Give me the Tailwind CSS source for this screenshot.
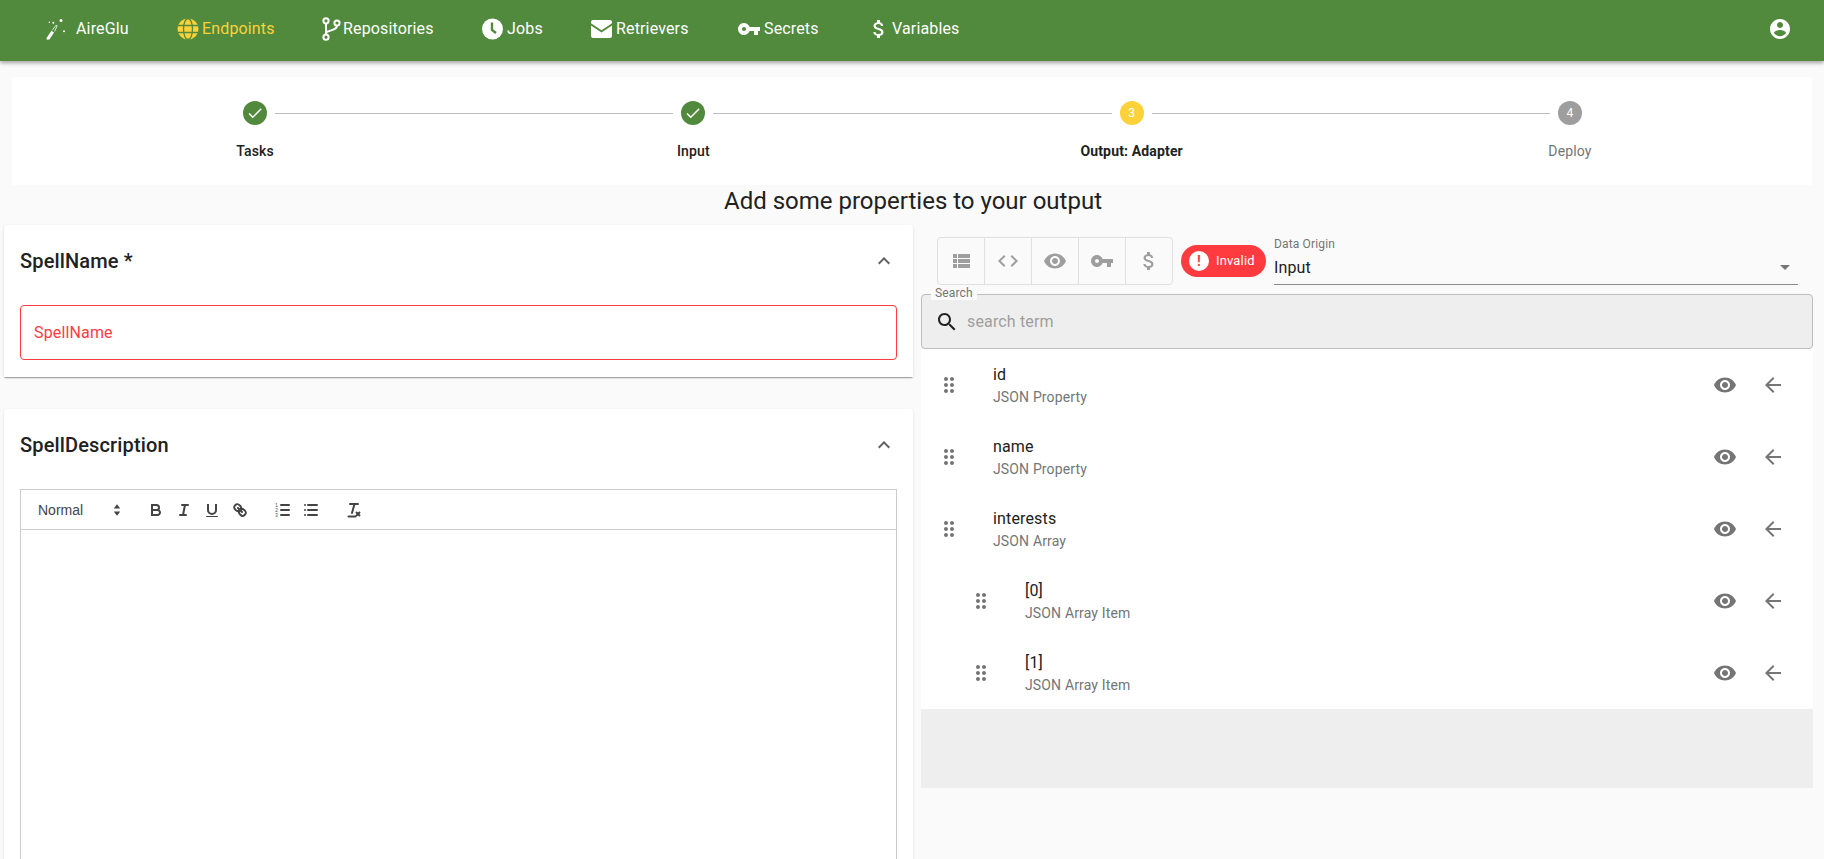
<!DOCTYPE html>
<html lang="en">
<head>
    <meta charset="UTF-8">
    <title>AireGlu</title>
    <script src="https://cdn.jsdelivr.net/npm/@tailwindcss/browser@4"></script>
</head>
<body class="bg-[#fafafa] font-[Roboto,sans-serif] tracking-[0.15px] text-[#212121] h-[859px] overflow-hidden">
    <!-- shared icons -->
    <svg class="hidden">
        <symbol id="i-eye" viewBox="0 0 24 24"><path d="M12 4.5C7 4.5 2.73 7.61 1 12c1.73 4.39 6 7.5 11 7.5s9.27-3.11 11-7.5c-1.73-4.39-6-7.5-11-7.5zM12 17c-2.76 0-5-2.24-5-5s2.24-5 5-5 5 2.24 5 5-2.24 5-5 5zm0-8c-1.66 0-3 1.34-3 3s1.34 3 3 3 3-1.34 3-3-1.34-3-3-3z"/></symbol>
        <symbol id="i-back" viewBox="0 0 24 24"><path d="M20 11H7.83l5.59-5.59L12 4l-8 8 8 8 1.41-1.41L7.83 13H20v-2z"/></symbol>
        <symbol id="i-drag" viewBox="0 0 24 24"><path d="M11 18c0 1.1-.9 2-2 2s-2-.9-2-2 .9-2 2-2 2 .9 2 2zm-2-8c-1.1 0-2 .9-2 2s.9 2 2 2 2-.9 2-2-.9-2-2-2zm0-6c-1.1 0-2 .9-2 2s.9 2 2 2 2-.9 2-2-.9-2-2-2zm6 4c1.1 0 2-.9 2-2s-.9-2-2-2-2 .9-2 2 .9 2 2 2zm0 2c-1.1 0-2 .9-2 2s.9 2 2 2 2-.9 2-2-.9-2-2-2zm0 6c-1.1 0-2 .9-2 2s.9 2 2 2 2-.9 2-2-.9-2-2-2z"/></symbol>
        <symbol id="i-key" viewBox="0 0 24 24"><path d="M12.65 10C11.83 7.67 9.61 6 7 6c-3.31 0-6 2.69-6 6s2.69 6 6 6c2.61 0 4.83-1.67 5.65-4H17v4h4v-4h2v-4H12.65zM7 14c-1.1 0-2-.9-2-2s.9-2 2-2 2 .9 2 2-.9 2-2 2z"/></symbol>
        <symbol id="i-dollar" viewBox="0 0 24 24"><path d="M11.8 10.9c-2.27-.59-3-1.2-3-2.15 0-1.09 1.01-1.85 2.7-1.85 1.78 0 2.44.85 2.5 2.1h2.21c-.07-1.72-1.12-3.3-3.21-3.81V3h-3v2.16c-1.94.42-3.5 1.68-3.5 3.61 0 2.31 1.91 3.46 4.7 4.13 2.5.6 3 1.48 3 2.41 0 .69-.49 1.79-2.7 1.79-2.06 0-2.87-.92-2.98-2.1h-2.2c.12 2.19 1.76 3.42 3.68 3.83V21h3v-2.15c1.95-.37 3.5-1.5 3.5-3.55 0-2.84-2.43-3.81-4.7-4.4z"/></symbol>
        <symbol id="i-check" viewBox="0 0 24 24"><path d="M9 16.17L4.83 12l-1.42 1.41L9 19 21 7l-1.41-1.41z"/></symbol>
        <symbol id="i-up" viewBox="0 0 24 24"><path d="M12 8l-6 6 1.41 1.41L12 10.83l4.59 4.58L18 14z"/></symbol>
    </svg>

    <!-- Navbar -->
    <nav class="relative z-10 h-[61px] bg-[#518a3c] text-white text-base flex items-center shadow-[0_2px_4px_rgba(0,0,0,0.35)] pl-[44px] pr-[32px] pb-1">
        <a class="flex items-center w-[133px] gap-[10px]">
            <svg class="w-[22px] h-6 shrink-0" viewBox="0 0 22 24" fill="#fff">
                <path d="M3 22.8l-.6-1.6 5-7.4 2.6 1.6-4.6 7.2z"/>
                <path d="M8.4 13.2l3.6-5 1.2.6-2.6 5.6" fill="none" stroke="#fff" stroke-width=".8"/>
                <circle cx="17" cy="3.5" r="1.5"/><circle cx="5.3" cy="5.2" r=".7"/><circle cx="9.3" cy="5.8" r="1"/><circle cx="20" cy="14.2" r="1"/>
            </svg>
            <span>AireGlu</span>
        </a>
        <a class="flex items-center w-[145px] gap-[3px] text-[#fdd13a]">
            <svg class="w-[22px] h-[22px] shrink-0" viewBox="0 0 22 22">
                <circle cx="11" cy="11" r="10.5" fill="#fdd13a"/>
                <g fill="none" stroke="#518a3c" stroke-width="1.3">
                    <ellipse cx="11" cy="11" rx="4.5" ry="10.5"/>
                    <path d="M1 7.5h20M1 14.5h20"/>
                </g>
            </svg>
            <span>Endpoints</span>
        </a>
        <a class="flex items-center w-[160px] gap-[2px]">
            <svg class="w-[19px] h-6 shrink-0" viewBox="0 0 19 24" fill="none" stroke="#fff" stroke-width="2">
                <circle cx="4" cy="3.8" r="2.6"/><circle cx="4" cy="20.2" r="2.6"/><circle cx="15" cy="6" r="2.6"/>
                <path d="M4 6.4v11.2M15 8.6c0 4.5-6 4-11 6.8"/>
            </svg>
            <span>Repositories</span>
        </a>
        <a class="flex items-center w-[109px] gap-[4px]">
            <svg class="w-[21px] h-6 shrink-0" viewBox="0 0 21 24">
                <circle cx="10.5" cy="12" r="10.5" fill="#fff"/>
                <path d="M10 5.5v7.5l4 3" fill="none" stroke="#518a3c" stroke-width="2.4"/>
            </svg>
            <span>Jobs</span>
        </a>
        <a class="flex items-center w-[146px] gap-[4px]">
            <svg class="w-[21px] h-[18px] shrink-0" viewBox="0 0 21 18">
                <path d="M2 0h17a2 2 0 0 1 2 2v1.3l-10.5 7L0 3.3V2a2 2 0 0 1 2-2zM0 5.6l10.5 7 10.5-7V16a2 2 0 0 1-2 2H2a2 2 0 0 1-2-2z" fill="#fff"/>
            </svg>
            <span>Retrievers</span>
        </a>
        <a class="flex items-center w-[130px] gap-[3px]">
            <svg class="w-6 h-6 shrink-0 fill-white"><use href="#i-key"/></svg>
            <span>Secrets</span>
        </a>
        <a class="flex items-center gap-[1px]">
            <svg class="w-6 h-6 shrink-0 fill-white"><use href="#i-dollar"/></svg>
            <span>Variables</span>
        </a>
        <svg class="w-6 h-6 ml-auto fill-white" viewBox="0 0 24 24"><path d="M12 2C6.48 2 2 6.48 2 12s4.48 10 10 10 10-4.48 10-10S17.52 2 12 2zm0 3c1.66 0 3 1.34 3 3s-1.34 3-3 3-3-1.34-3-3 1.34-3 3-3zm0 14.2c-2.5 0-4.71-1.28-6-3.22.03-1.99 4-3.08 6-3.08 1.99 0 5.97 1.09 6 3.08-1.29 1.94-3.5 3.22-6 3.22z"/></svg>
    </nav>

    <!-- Stepper -->
    <div class="mx-3 mt-[16px] h-[108px] bg-white flex pl-[231px] pr-[230px] pt-[24px] text-sm font-medium">
        <div class="w-6 flex flex-col items-center">
            <div class="w-6 h-6 shrink-0 rounded-full bg-[#518a3c] flex items-center justify-center"><svg class="w-[18px] h-[18px] fill-white"><use href="#i-check"/></svg></div>
            <span class="mt-4 whitespace-nowrap">Tasks</span>
        </div>
        <div class="flex-1 h-px bg-[#bdbdbd] mx-2 mt-3"></div>
        <div class="w-6 flex flex-col items-center">
            <div class="w-6 h-6 shrink-0 rounded-full bg-[#518a3c] flex items-center justify-center"><svg class="w-[18px] h-[18px] fill-white"><use href="#i-check"/></svg></div>
            <span class="mt-4 whitespace-nowrap">Input</span>
        </div>
        <div class="flex-1 h-px bg-[#bdbdbd] mx-2 mt-3"></div>
        <div class="w-6 flex flex-col items-center">
            <div class="w-6 h-6 shrink-0 rounded-full bg-[#fdd13a] text-white text-xs font-normal flex items-center justify-center">3</div>
            <span class="mt-4 whitespace-nowrap font-bold">Output: Adapter</span>
        </div>
        <div class="flex-1 h-px bg-[#bdbdbd] mx-2 mt-3"></div>
        <div class="w-6 flex flex-col items-center">
            <div class="w-6 h-6 shrink-0 rounded-full bg-[#9e9e9e] text-white text-xs font-normal flex items-center justify-center">4</div>
            <span class="mt-4 whitespace-nowrap font-normal text-[#757575]">Deploy</span>
        </div>
    </div>

    <h2 class="text-2xl leading-[32px] tracking-normal text-center h-[40px] pl-[2px]">Add some properties to your output</h2>

    <div class="flex gap-2 px-1 items-start">
        <!-- Left column -->
        <div class="w-[909px] shrink-0">
            <section class="bg-white h-[152px] rounded-t-sm px-4 shadow-[0_2px_1px_-1px_rgba(0,0,0,0.2),0_1px_1px_0_rgba(0,0,0,0.14),0_1px_3px_0_rgba(0,0,0,0.12)]">
                <div class="h-[72px] mb-2 flex items-center justify-between pr-[1px]">
                    <h3 class="text-xl font-medium">SpellName *</h3>
                    <svg class="w-6 h-6 fill-[#616161]"><use href="#i-up"/></svg>
                </div>
                <div class="h-[55px] border border-[#ff3b3f] rounded flex items-center px-[13px] text-[#ff3b3f] text-base">SpellName</div>
            </section>
            <section class="bg-white mt-8 h-[600px] rounded-t-sm px-4 shadow-[0_1px_3px_rgba(0,0,0,0.12)]">
                <div class="h-[72px] mb-2 flex items-center justify-between pr-[1px]">
                    <h3 class="text-xl font-medium">SpellDescription</h3>
                    <svg class="w-6 h-6 fill-[#616161]"><use href="#i-up"/></svg>
                </div>
                <!-- Editor -->
                <div class="border border-[#ccc] h-[500px] tracking-normal font-['Liberation_Sans',sans-serif]">
                    <div class="h-[40px] border-b border-[#ccc] flex items-center pl-2 text-[#444]">
                        <div class="w-[98px] pl-[9px] pr-[1px] flex items-center justify-between text-sm">
                            <span>Normal</span>
                            <svg class="w-[18px] h-[18px] fill-[#444]" viewBox="0 0 18 18"><path d="M9 3.2l3.2 4.3H5.8zM9 14.8l-3.2-4.3h6.4z"/></svg>
                        </div>
                        <div class="ml-[15px] flex">
                            <button class="w-7 h-6 flex items-center justify-center"><svg class="w-[18px] h-[18px]" viewBox="0 0 18 18" fill="none" stroke="#444" stroke-width="2"><path d="M5,4H9.5A2.5,2.5,0,0,1,12,6.5v0A2.5,2.5,0,0,1,9.5,9H5V4Z"/><path d="M5,9h5.5A2.5,2.5,0,0,1,13,11.5v0A2.5,2.5,0,0,1,10.5,14H5V9Z"/></svg></button>
                            <button class="w-7 h-6 flex items-center justify-center"><svg class="w-[18px] h-[18px]" viewBox="0 0 18 18" fill="none" stroke="#444" stroke-width="2" stroke-linecap="round"><path d="M7 4h6M5 14h6M8 14l2-10"/></svg></button>
                            <button class="w-7 h-6 flex items-center justify-center"><svg class="w-[18px] h-[18px]" viewBox="0 0 18 18" fill="none" stroke="#444" stroke-width="2"><path d="M5,3V9a4.012,4.012,0,0,0,4,4H9a4.012,4.012,0,0,0,4-4V3"/><rect x="3" y="15" width="12" height="1" rx=".5" fill="#444" stroke="none"/></svg></button>
                            <button class="w-7 h-6 flex items-center justify-center"><svg class="w-[18px] h-[18px]" viewBox="0 0 18 18" fill="none" stroke="#444" stroke-width="2" stroke-linecap="round"><path d="M7 7l4 4"/><path d="M8.9,4.577a3.476,3.476,0,0,1,.36,4.679A3.476,3.476,0,0,1,4.577,8.9C3.185,7.5,2.035,6.4,4.217,4.217S7.5,3.185,8.9,4.577Z"/><path d="M13.423,9.1a3.476,3.476,0,0,0-4.679-.36,3.476,3.476,0,0,0,.36,4.679c1.392,1.392,2.5,2.542,4.679.36S14.815,10.5,13.423,9.1Z"/></svg></button>
                        </div>
                        <div class="ml-[15px] flex">
                            <button class="w-7 h-6 flex items-center justify-center"><svg class="w-[18px] h-[18px]" viewBox="0 0 18 18" stroke="#444" stroke-width="2" stroke-linecap="round"><path d="M7 4h8M7 9h8M7 14h8"/><text x="2.5" y="5.5" font-size="4.5" text-anchor="middle" fill="#444" stroke="none">1</text><text x="2.5" y="10.5" font-size="4.5" text-anchor="middle" fill="#444" stroke="none">2</text><text x="2.5" y="15.5" font-size="4.5" text-anchor="middle" fill="#444" stroke="none">3</text></svg></button>
                            <button class="w-7 h-6 flex items-center justify-center"><svg class="w-[18px] h-[18px]" viewBox="0 0 18 18" stroke="#444" stroke-width="2" stroke-linecap="round"><path d="M6 4h9M6 9h9M6 14h9M3 4h0M3 9h0M3 14h0"/></svg></button>
                        </div>
                        <div class="ml-[15px]">
                            <button class="w-7 h-6 flex items-center justify-center"><svg class="w-[18px] h-[18px]" viewBox="0 0 18 18" fill="none" stroke="#444"><path d="M5 3h8M9.5 3L7 12M3.5 15.5h7" stroke-width="2" stroke-linecap="round"/><path d="M11 11l4 4M15 11l-4 4" stroke-width="2"/></svg></button>
                        </div>
                    </div>
                </div>
            </section>
        </div>

        <!-- Right column -->
        <div class="w-[892px] shrink-0">
            <div class="h-[69px] pt-3 pl-4 flex items-start">
                <div class="flex h-12 border border-[#e0e0e0] rounded divide-x divide-[#e0e0e0] fill-[#9e9e9e]">
                    <button class="w-[47px] flex items-center justify-center"><svg class="w-6 h-6" viewBox="0 0 24 24"><path d="M4 14h4v-4H4v4zm0 5h4v-4H4v4zM4 9h4V5H4v4zm5 5h12v-4H9v4zm0 5h12v-4H9v4zM9 5v4h12V5H9z"/></svg></button>
                    <button class="w-[47px] flex items-center justify-center"><svg class="w-6 h-6" viewBox="0 0 24 24"><path d="M9.4 16.6L4.8 12l4.6-4.6L8 6l-6 6 6 6 1.4-1.4zm5.2 0l4.6-4.6-4.6-4.6L16 6l6 6-6 6-1.4-1.4z"/></svg></button>
                    <button class="w-[47px] flex items-center justify-center"><svg class="w-6 h-6"><use href="#i-eye"/></svg></button>
                    <button class="w-[47px] flex items-center justify-center"><svg class="w-6 h-6"><use href="#i-key"/></svg></button>
                    <button class="w-[46px] flex items-center justify-center"><svg class="w-6 h-6"><use href="#i-dollar"/></svg></button>
                </div>
                <div class="ml-2 mt-2 h-8 w-[85px] rounded-full bg-[#ff3b3f] text-white text-[13px] flex items-center pl-2 gap-[7px]">
                    <span class="w-5 h-5 rounded-full bg-white text-[#ff3b3f] font-bold text-sm flex items-center justify-center">!</span>
                    <span>Invalid</span>
                </div>
                <div class="ml-2 w-[524px] h-12">
                    <div class="text-xs leading-[14px] text-[#757575]">Data Origin</div>
                    <div class="h-[34px] border-b border-[#8c8c8c] flex items-center justify-between pr-2 text-base">
                        <span>Input</span>
                        <span class="w-0 h-0 border-x-[5px] border-x-transparent border-t-[5px] border-t-[#757575]"></span>
                    </div>
                </div>
            </div>

            <!-- Search -->
            <div class="relative h-[55px] bg-[#eeeeee] border border-[#bdbdbd] rounded flex items-center pl-[13px] gap-2">
                <span class="absolute left-[9px] top-[-9px] px-[4px] text-xs leading-[14px] text-[#757575] bg-[#fafafa]">Search</span>
                <svg class="w-6 h-6 fill-[#212121]" viewBox="0 0 24 24"><path d="M15.5 14h-.79l-.28-.27C15.41 12.59 16 11.11 16 9.5 16 5.91 13.09 3 9.5 3S3 5.91 3 9.5 5.91 16 9.5 16c1.61 0 3.09-.59 4.23-1.57l.27.28v.79l5 4.99L20.49 19l-4.99-5zm-6 0C7.01 14 5 11.99 5 9.5S7.01 5 9.5 5 14 7.01 14 9.5 11.99 14 9.5 14z"/></svg>
                <span class="text-base text-[#9e9e9e]">search term</span>
            </div>

            <!-- Property list -->
            <div class="bg-white fill-[#757575]">
                <div class="h-[72px] flex items-center pl-4">
                    <svg class="w-6 h-6"><use href="#i-drag"/></svg>
                    <div class="ml-[32px] flex-1"><div class="text-base leading-[24px]">id</div><div class="text-sm leading-[20px] text-[#757575]">JSON Property</div></div>
                    <svg class="w-6 h-6"><use href="#i-eye"/></svg>
                    <svg class="w-6 h-6 ml-6 mr-[28px]"><use href="#i-back"/></svg>
                </div>
                <div class="h-[72px] flex items-center pl-4">
                    <svg class="w-6 h-6"><use href="#i-drag"/></svg>
                    <div class="ml-[32px] flex-1"><div class="text-base leading-[24px]">name</div><div class="text-sm leading-[20px] text-[#757575]">JSON Property</div></div>
                    <svg class="w-6 h-6"><use href="#i-eye"/></svg>
                    <svg class="w-6 h-6 ml-6 mr-[28px]"><use href="#i-back"/></svg>
                </div>
                <div class="h-[72px] flex items-center pl-4">
                    <svg class="w-6 h-6"><use href="#i-drag"/></svg>
                    <div class="ml-[32px] flex-1"><div class="text-base leading-[24px]">interests</div><div class="text-sm leading-[20px] text-[#757575]">JSON Array</div></div>
                    <svg class="w-6 h-6"><use href="#i-eye"/></svg>
                    <svg class="w-6 h-6 ml-6 mr-[28px]"><use href="#i-back"/></svg>
                </div>
                <div class="h-[72px] flex items-center pl-[48px]">
                    <svg class="w-6 h-6"><use href="#i-drag"/></svg>
                    <div class="ml-[32px] flex-1"><div class="text-base leading-[24px]">[0]</div><div class="text-sm leading-[20px] text-[#757575]">JSON Array Item</div></div>
                    <svg class="w-6 h-6"><use href="#i-eye"/></svg>
                    <svg class="w-6 h-6 ml-6 mr-[28px]"><use href="#i-back"/></svg>
                </div>
                <div class="h-[72px] flex items-center pl-[48px]">
                    <svg class="w-6 h-6"><use href="#i-drag"/></svg>
                    <div class="ml-[32px] flex-1"><div class="text-base leading-[24px]">[1]</div><div class="text-sm leading-[20px] text-[#757575]">JSON Array Item</div></div>
                    <svg class="w-6 h-6"><use href="#i-eye"/></svg>
                    <svg class="w-6 h-6 ml-6 mr-[28px]"><use href="#i-back"/></svg>
                </div>
            </div>
            <div class="h-[79px] bg-[#eeeeee]"></div>
        </div>
    </div>
</body>
</html>
